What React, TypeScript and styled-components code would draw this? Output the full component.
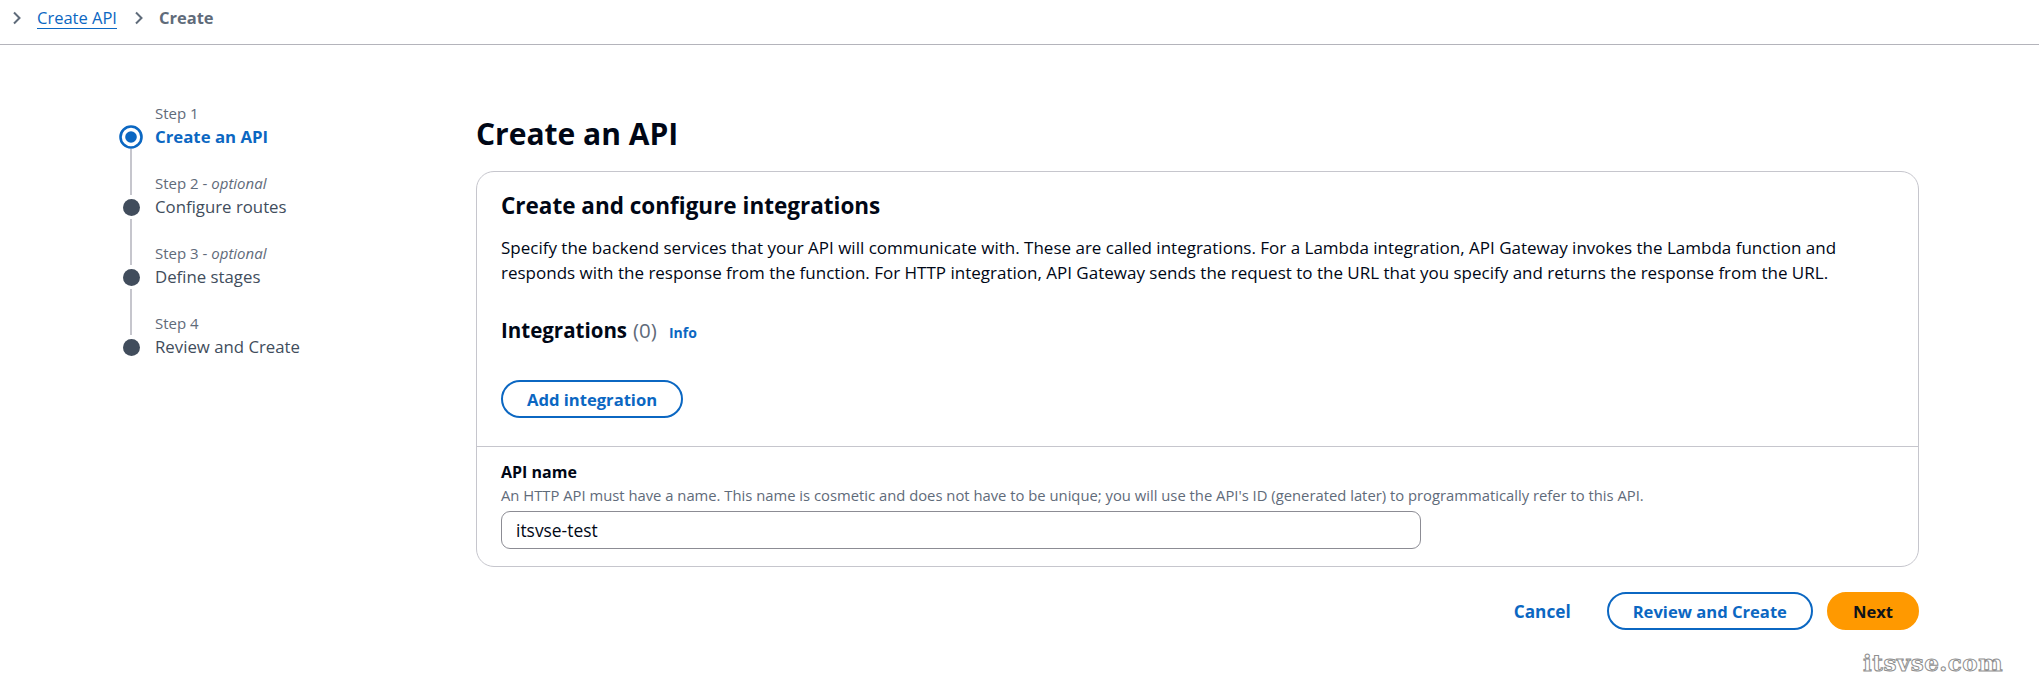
import { FC } from "react";
import styled, { createGlobalStyle } from "styled-components";

const GlobalStyle = createGlobalStyle`
  body {
    margin: 0;
    background: #ffffff;
    font-family: "Open Sans", "Noto Sans", sans-serif;
    color: #000716;
  }
`;

const blue = "#0b67c2";

const Page = styled.div`
  position: relative;
  width: 2039px;
  height: 688px;
  overflow: hidden;
`;

const Breadcrumbs = styled.nav`
  display: flex;
  align-items: center;
  gap: 14px;
  box-sizing: border-box;
  height: 45px;
  padding: 0 0 8px 11px;
  border-bottom: 1px solid #b4b4bb;
  font-size: 16.5px;
  line-height: 24px;
`;

const Crumb = styled.a`
  color: ${blue};
  text-decoration: underline;
  text-underline-offset: 4px;
  margin-right: 2px;
`;

const CurrentCrumb = styled.span`
  color: #5f6b7a;
  font-weight: 700;
`;

const Chevron: FC = () => (
  <svg width="12" height="14" viewBox="0 0 12 14" fill="none">
    <path d="M3 1.5 L8.5 7 L3 12.5" stroke="#5f6b7a" strokeWidth="2" />
  </svg>
);

const Layout = styled.div`
  display: grid;
  grid-template-columns: 357px 1fr;
  padding: 57px 120px 0 119px;
`;

const Steps = styled.ol`
  list-style: none;
  margin: 0;
  padding: 0;
`;

const Step = styled.li`
  display: grid;
  grid-template-columns: 24px 1fr;
  column-gap: 12px;
`;

const Indicator = styled.div`
  display: flex;
  flex-direction: column;
  align-items: center;
`;

const Connector = styled.div<{ $hidden?: boolean; $grow?: boolean }>`
  width: 2px;
  height: ${(p) => (p.$grow ? "auto" : "23px")};
  flex: ${(p) => (p.$grow ? "1" : "none")};
  background: ${(p) => (p.$hidden ? "transparent" : "#c6c6cd")};
`;

const DotSlot = styled.div`
  height: 24px;
  display: flex;
  align-items: center;
  justify-content: center;
`;

const Dot = styled.span`
  width: 17px;
  height: 17px;
  border-radius: 50%;
  background: #414d5c;
`;

const StepText = styled.div`
  padding-bottom: 23px;
`;

const StepLabel = styled.div`
  font-size: 15px;
  line-height: 23px;
  color: #5f6b7a;

  em {
    font-style: italic;
  }
`;

const StepTitle = styled.div<{ $active?: boolean }>`
  font-size: 16.8px;
  line-height: 24px;
  color: ${(p) => (p.$active ? blue : "#414d5c")};
  font-weight: ${(p) => (p.$active ? 700 : 400)};
`;

const ActiveRing: FC = () => (
  <svg width="24" height="24" viewBox="0 0 24 24">
    <circle cx="12" cy="12" r="10.5" fill="#fff" stroke={blue} strokeWidth="2.6" />
    <circle cx="12" cy="12" r="5.8" fill={blue} />
  </svg>
);

const Main = styled.main`
  padding-top: 14px;
`;

const PageTitle = styled.h1`
  margin: 0 0 19px;
  font-size: 30px;
  line-height: 36px;
  font-weight: 700;
`;

const Card = styled.section`
  border: 1px solid #c6c6cd;
  border-radius: 18px;
  overflow: hidden;
`;

const CardBody = styled.div`
  padding: 19px 24px 28px;
`;

const CardTitle = styled.h2`
  margin: 0;
  font-size: 22.5px;
  line-height: 30px;
  font-weight: 700;
`;

const Description = styled.p`
  margin: 14px 0 0;
  font-size: 17px;
  line-height: 25px;
  max-width: 1370px;
`;

const SubHeading = styled.h3`
  display: flex;
  align-items: baseline;
  margin: 31px 0 0;
  font-size: 20.5px;
  line-height: 28px;
  font-weight: 700;
`;

const Count = styled.span`
  font-weight: 400;
  color: #5f6b7a;
  margin-left: 6px;
`;

const InfoLink = styled.a`
  margin-left: 12px;
  font-size: 14px;
  font-weight: 700;
  color: ${blue};
`;

const Button = styled.button<{ $variant?: "normal" | "primary" | "link" }>`
  box-sizing: border-box;
  height: 38px;
  padding: 0 ${(p) => (p.$variant === "link" ? "20px" : "24px")};
  border-radius: 20px;
  font-family: inherit;
  font-size: ${(p) => (p.$variant === "link" ? "17.2px" : "16.6px")};
  font-weight: 700;
  cursor: pointer;
  border: 2px solid
    ${(p) =>
      p.$variant === "normal" ? blue : p.$variant === "primary" ? "#ff9900" : "transparent"};
  background: ${(p) => (p.$variant === "primary" ? "#ff9900" : "#fff")};
  color: ${(p) => (p.$variant === "primary" ? "#0f141a" : blue)};
`;

const AddButton = styled(Button)`
  margin-top: 33px;
`;

const CardFooter = styled.div`
  border-top: 1px solid #c6c6cd;
  padding: 14px 24px 17px;
`;

const FieldLabel = styled.label`
  display: block;
  font-size: 16px;
  line-height: 22px;
  font-weight: 700;
`;

const FieldHint = styled.div`
  margin-top: 2px;
  font-size: 14.8px;
  line-height: 20px;
  color: #5f6b7a;
`;

const TextInput = styled.input`
  display: block;
  box-sizing: border-box;
  margin-top: 6px;
  width: 920px;
  height: 38px;
  padding: 0 14px;
  border: 1px solid #8c8c94;
  border-radius: 9px;
  font-family: inherit;
  font-size: 17.4px;
  color: #000716;
  outline: none;
`;

const Actions = styled.div`
  display: flex;
  justify-content: flex-end;
  gap: 14px;
  margin-top: 25px;
`;

const Watermark = styled.div`
  position: absolute;
  right: 36px;
  bottom: 12px;
  font-family: "DejaVu Serif", "Liberation Serif", serif;
  font-weight: 700;
  font-size: 23px;
  letter-spacing: 0.5px;
  color: #ffffff;
  -webkit-text-stroke: 1px #8f8f8f;
`;

const steps = [
  { label: "Step 1", optional: false, title: "Create an API" },
  { label: "Step 2", optional: true, title: "Configure routes" },
  { label: "Step 3", optional: true, title: "Define stages" },
  { label: "Step 4", optional: false, title: "Review and Create" },
];

export default function App() {
  return (
    <Page>
      <GlobalStyle />
      <Breadcrumbs>
        <Chevron />
        <Crumb>Create API</Crumb>
        <Chevron />
        <CurrentCrumb>Create</CurrentCrumb>
      </Breadcrumbs>

      <Layout>
        <Steps>
          {steps.map((s, i) => (
            <Step key={s.label}>
              <Indicator>
                <Connector $hidden={i === 0} />
                <DotSlot>{i === 0 ? <ActiveRing /> : <Dot />}</DotSlot>
                <Connector $grow $hidden={i === steps.length - 1} />
              </Indicator>
              <StepText>
                <StepLabel>
                  {s.label}
                  {s.optional && (
                    <>
                      {" - "}
                      <em>optional</em>
                    </>
                  )}
                </StepLabel>
                <StepTitle $active={i === 0}>{s.title}</StepTitle>
              </StepText>
            </Step>
          ))}
        </Steps>

        <Main>
          <PageTitle>Create an API</PageTitle>
          <Card>
            <CardBody>
              <CardTitle>Create and configure integrations</CardTitle>
              <Description>
                Specify the backend services that your API will communicate with. These are
                called integrations. For a Lambda integration, API Gateway invokes the Lambda
                function and responds with the response from the function. For HTTP integration,
                API Gateway sends the request to the URL that you specify and returns the
                response from the URL.
              </Description>
              <SubHeading>
                Integrations<Count>(0)</Count>
                <InfoLink>Info</InfoLink>
              </SubHeading>
              <AddButton $variant="normal">Add integration</AddButton>
            </CardBody>
            <CardFooter>
              <FieldLabel htmlFor="api-name">API name</FieldLabel>
              <FieldHint>
                An HTTP API must have a name. This name is cosmetic and does not have to be
                unique; you will use the API's ID (generated later) to programmatically refer to
                this API.
              </FieldHint>
              <TextInput id="api-name" defaultValue="itsvse-test" />
            </CardFooter>
          </Card>
          <Actions>
            <Button $variant="link">Cancel</Button>
            <Button $variant="normal">Review and Create</Button>
            <Button $variant="primary">Next</Button>
          </Actions>
        </Main>
      </Layout>

      <Watermark>itsvse.com</Watermark>
    </Page>
  );
}
